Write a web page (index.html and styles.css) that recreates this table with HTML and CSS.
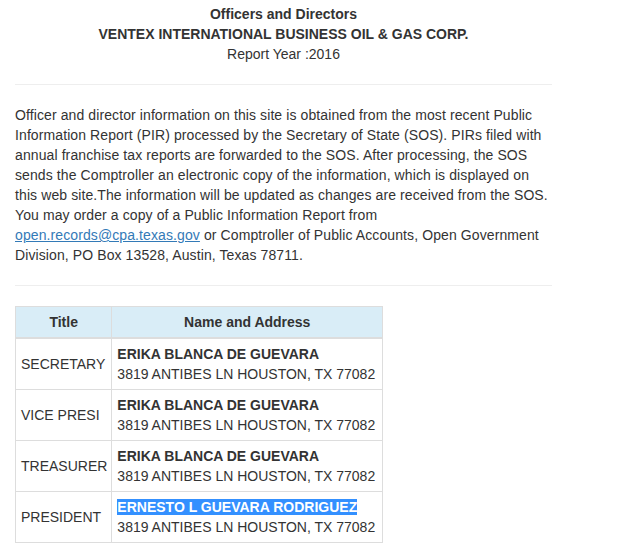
FILE: index.html
```html
<!DOCTYPE html>
<html>
<head>
<meta charset="utf-8">
<link rel="stylesheet" href="styles.css">
</head>
<body>
<div class="page">
  <div class="heading">
    <div class="strong">Officers and Directors</div>
    <div class="strong">VENTEX INTERNATIONAL BUSINESS OIL &amp; GAS CORP.</div>
    <div>Report Year :2016</div>
  </div>
  <hr class="rule">
  <p class="info">Officer and director information on this site is obtained from the most recent Public Information Report (PIR) processed by the Secretary of State (SOS). PIRs filed with annual franchise tax reports are forwarded to the SOS. After processing, the SOS sends the Comptroller an electronic copy of the information, which is displayed on this web site.The information will be updated as changes are received from the SOS. You may order a copy of a Public Information Report from <a class="link" href="#">open.records@cpa.texas.gov</a> or Comptroller of Public Accounts, Open Government Division, PO Box 13528, Austin, Texas 78711.</p>
  <hr class="rule">
  <table class="officers">
    <thead>
      <tr><th>Title</th><th>Name and Address</th></tr>
    </thead>
    <tbody>
      <tr><td class="title">SECRETARY</td><td class="person"><div class="name">ERIKA BLANCA DE GUEVARA</div><div>3819 ANTIBES LN HOUSTON, TX 77082</div></td></tr>
      <tr><td class="title">VICE PRESI</td><td class="person"><div class="name">ERIKA BLANCA DE GUEVARA</div><div>3819 ANTIBES LN HOUSTON, TX 77082</div></td></tr>
      <tr><td class="title">TREASURER</td><td class="person"><div class="name">ERIKA BLANCA DE GUEVARA</div><div>3819 ANTIBES LN HOUSTON, TX 77082</div></td></tr>
      <tr><td class="title">PRESIDENT</td><td class="person"><div class="name"><span class="selected">ERNESTO L GUEVARA RODRIGUEZ</span></div><div>3819 ANTIBES LN HOUSTON, TX 77082</div></td></tr>
    </tbody>
  </table>
</div>
</body>
</html>
```
FILE: styles.css
```css
html, body {
  margin: 0;
  padding: 0;
  background: #fff;
}
body {
  font-family: "Liberation Sans", Arial, sans-serif;
  font-size: 14px;
  line-height: 20px;
  color: #333;
}
.page {
  width: 537px;
  margin-left: 15px;
  padding-top: 4px;
}
.heading {
  text-align: center;
}
.strong {
  font-weight: bold;
}
.rule {
  margin: 20px 0;
  border: 0;
  border-top: 1px solid #eee;
  height: 0;
}
.info {
  margin: 0;
  letter-spacing: 0.1px;
}
.link {
  color: #337ab7;
  text-decoration: underline;
}
.officers {
  border-collapse: collapse;
  border: 1px solid #ddd;
}
.officers th {
  background: #d9edf7;
  font-weight: bold;
  text-align: center;
  padding: 5px;
  border: 1px solid #ddd;
  border-bottom-width: 2px;
  line-height: 20px;
}
.officers td {
  padding: 5px;
  border: 1px solid #ddd;
  vertical-align: middle;
  line-height: 20px;
}
.officers td.title {
  padding-right: 4px;
}
.officers td.person {
  padding-right: 7px;
}
.name {
  font-weight: bold;
}
.selected {
  background: #3390ff;
  color: #fff;
}
```
